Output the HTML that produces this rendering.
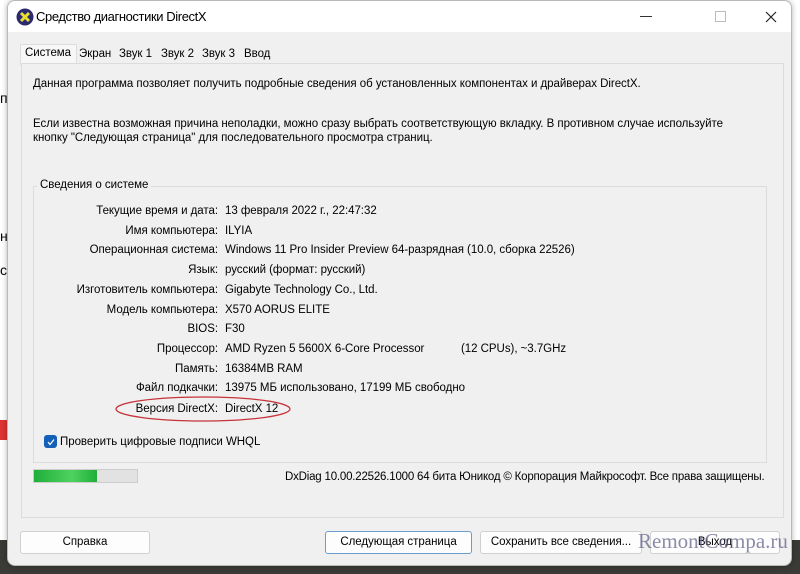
<!DOCTYPE html>
<html><head><meta charset="utf-8"><style>
body{margin:0;width:800px;height:574px;overflow:hidden;background:#fff;position:relative;font-family:"Liberation Sans","DejaVu Sans",sans-serif;font-size:11.5px;letter-spacing:-0.04px;color:#000}
.a{position:absolute;white-space:nowrap}
#bg{position:absolute;left:0;top:540px;width:800px;height:34px;background:#3a3a36}
#win{position:absolute;left:7px;top:0;width:783px;height:564px;background:#f0f0f0;border:1px solid #b8b8b8;border-radius:8px;overflow:hidden;box-shadow:0 0 6px rgba(0,0,0,.3)}
#tb{position:absolute;left:0;top:0;width:783px;height:31px;background:#fff}
.btn{position:absolute;top:530px;height:21px;background:#fdfdfd;border:1px solid #d0d0d0;border-radius:3px;text-align:center;line-height:21px}
.l{position:absolute;width:210px;text-align:right;left:0}
.v{position:absolute;left:217px}
</style></head><body>
<div class="a" style="left:0;top:90px;font-size:14px">п</div>
<div class="a" style="left:0;top:228px;font-size:14px">н</div>
<div class="a" style="left:0;top:262px;font-size:14px">с</div>
<div id="bg"></div>
<div style="position:absolute;left:0;top:420px;width:7px;height:20px;background:#d33"></div>
<div id="win">
<div id="tb">
<svg style="position:absolute;left:8px;top:7px" width="18" height="18" viewBox="0 0 18 18"><circle cx="9" cy="9" r="8.5" fill="#2b2a6e"/><path d="M5 5L13 13M13 5L5 13" stroke="#e8e030" stroke-width="3"/></svg>
<div class="a" style="left:28px;top:8px;font-size:13px;letter-spacing:-0.4px">Средство диагностики DirectX</div>
<div class="a" style="left:632px;top:15px;width:12px;height:1px;background:#333"></div>
<div class="a" style="left:707px;top:10px;width:9px;height:9px;border:1px solid #bbb"></div>
<svg style="position:absolute;left:757px;top:10px" width="12" height="12"><path d="M1 1L11 11M11 1L1 11" stroke="#222" stroke-width="1.2"/></svg>
</div>
<div class="a" style="left:12px;top:43px;width:55px;height:20px;background:#f7f7f7;border:1px solid #ddd;border-bottom:none"></div>
<div class="a" style="left:17px;top:46px">Система</div>
<div class="a" style="left:71px;top:47px">Экран</div>
<div class="a" style="left:111px;top:47px">Звук 1</div>
<div class="a" style="left:153px;top:47px">Звук 2</div>
<div class="a" style="left:194px;top:47px">Звук 3</div>
<div class="a" style="left:236px;top:47px">Ввод</div>
<div class="a" style="left:13px;top:62px;width:761px;height:453px;border:1px solid #dcdcdc;background:#f0f0f0"></div>
<div class="a" style="left:25px;top:77px">Данная программа позволяет получить подробные сведения об установленных компонентах и драйверах DirectX.</div>
<div class="a" style="left:25px;top:117px">Если известна возможная причина неполадки, можно сразу выбрать соответствующую вкладку. В противном случае используйте</div>
<div class="a" style="left:25px;top:131px">кнопку "Следующая страница" для последовательного просмотра страниц.</div>
<div class="a" style="left:25px;top:185px;width:732px;height:275px;border:1px solid #dcdcdc"></div>
<div class="a" style="left:29px;top:178px;background:#f0f0f0;padding:0 3px">Сведения о системе</div>
<div class="a" style="left:0;top:204px;width:760px;height:230px">
<div class="l" style="top:0">Текущие время и дата:</div><div class="v" style="top:0">13 февраля 2022 г., 22:47:32</div>
<div class="l" style="top:19.7px">Имя компьютера:</div><div class="v" style="top:19.7px">ILYIA</div>
<div class="l" style="top:39.4px">Операционная система:</div><div class="v" style="top:39.4px">Windows 11 Pro Insider Preview 64-разрядная (10.0, сборка 22526)</div>
<div class="l" style="top:59.1px">Язык:</div><div class="v" style="top:59.1px">русский (формат: русский)</div>
<div class="l" style="top:78.8px">Изготовитель компьютера:</div><div class="v" style="top:78.8px">Gigabyte Technology Co., Ltd.</div>
<div class="l" style="top:98.5px">Модель компьютера:</div><div class="v" style="top:98.5px">X570 AORUS ELITE</div>
<div class="l" style="top:118.2px">BIOS:</div><div class="v" style="top:118.2px">F30</div>
<div class="l" style="top:137.9px">Процессор:</div><div class="v" style="top:137.9px">AMD Ryzen 5 5600X 6-Core Processor</div><div class="v" style="top:137.9px;left:453px">(12 CPUs), ~3.7GHz</div>
<div class="l" style="top:157.6px">Память:</div><div class="v" style="top:157.6px">16384MB RAM</div>
<div class="l" style="top:177.3px">Файл подкачки:</div><div class="v" style="top:177.3px">13975 МБ использовано, 17199 МБ свободно</div>
<div class="l" style="top:198px">Версия DirectX:</div><div class="v" style="top:198px">DirectX 12</div>
</div>
<svg style="position:absolute;left:105px;top:393px" width="180" height="30"><ellipse cx="90" cy="15" rx="87" ry="12" fill="none" stroke="#c8323a" stroke-width="1.3"/></svg>
<div class="a" style="left:36px;top:434px;width:13px;height:13px;background:#1460b8;border-radius:3px"></div>
<svg style="position:absolute;left:38px;top:436px" width="10" height="10"><path d="M2 5L4 7.5L8 2.5" stroke="#fff" stroke-width="1.2" fill="none"/></svg>
<div class="a" style="left:52px;top:435px">Проверить цифровые подписи WHQL</div>
<div class="a" style="left:25px;top:468px;width:103px;height:12px;background:#e2e2e2;border:1px solid #ccc"></div>
<div class="a" style="left:26px;top:469px;width:63px;height:12px;background:linear-gradient(90deg,#1fae3a,#4fd25f 60%,#1fae3a)"></div>
<div class="a" style="left:277px;top:470px;letter-spacing:-0.2px">DxDiag 10.00.22526.1000 64 бита Юникод © Корпорация Майкрософт. Все права защищены.</div>
<div class="btn" style="left:12px;width:128px">Справка</div>
<div class="btn" style="left:317px;width:145px;border-color:#6a9cd0">Следующая страница</div>
<div class="btn" style="left:472px;width:160px">Сохранить все сведения...</div>
<div class="btn" style="left:642px;width:128px">Выход</div>
<div class="a" style="left:630px;top:528px;font-family:'Liberation Serif',serif;font-size:21px;letter-spacing:0;color:rgba(90,90,130,.7)">RemontCompa.ru</div>
</div>
</body></html>
